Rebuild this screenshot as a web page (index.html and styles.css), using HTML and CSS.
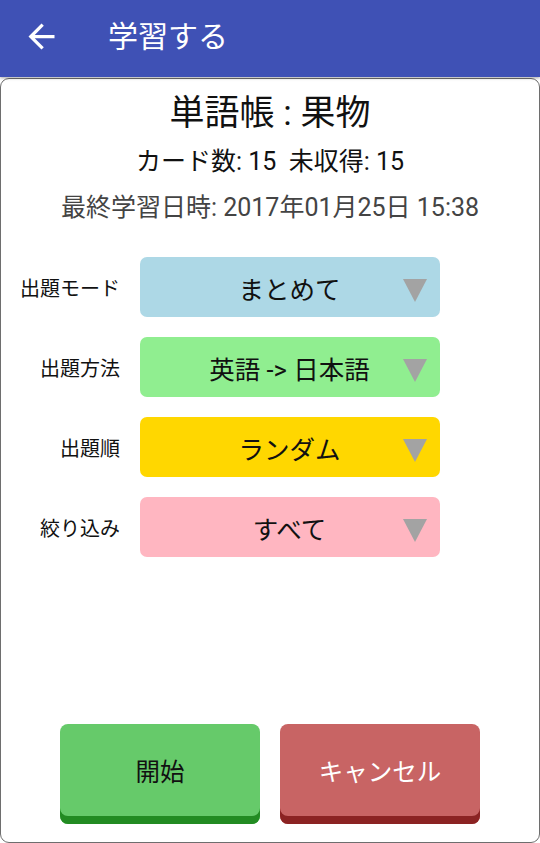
FILE: index.html
```html
<!DOCTYPE html>
<html lang="ja">
<head>
<meta charset="utf-8">
<link rel="stylesheet" href="styles.css">
</head>
<body>
<header class="appbar">
  <svg class="back" viewBox="0 0 24 24" width="39" height="39"><path d="M20 11H7.83l5.59-5.59L12 4l-8 8 8 8 1.41-1.41L7.83 13H20v-2z" fill="#fff"/></svg>
  <h1 class="appbar-title">学習する</h1>
</header>
<main class="card">
  <h2 class="deck-title">単語帳 : 果物</h2>
  <p class="counts">カード数: 15&nbsp; 未収得: 15</p>
  <p class="last">最終学習日時: 2017年01月25日 15:38</p>
  <div class="rows">
    <div class="row">
      <span class="label">出題モード</span>
      <div class="select sel-blue"><span class="value">まとめて</span><span class="arrow"></span></div>
    </div>
    <div class="row">
      <span class="label">出題方法</span>
      <div class="select sel-green"><span class="value">英語 -&gt; 日本語</span><span class="arrow"></span></div>
    </div>
    <div class="row">
      <span class="label">出題順</span>
      <div class="select sel-gold"><span class="value">ランダム</span><span class="arrow"></span></div>
    </div>
    <div class="row">
      <span class="label">絞り込み</span>
      <div class="select sel-pink"><span class="value">すべて</span><span class="arrow"></span></div>
    </div>
  </div>
  <div class="actions">
    <button class="btn btn-start">開始</button>
    <button class="btn btn-cancel">キャンセル</button>
  </div>
</main>
</body>
</html>
```
FILE: styles.css
```css
* { box-sizing: border-box; }
html, body {
  margin: 0;
  padding: 0;
  width: 540px;
  height: 843px;
  background: #fff;
  font-family: Roboto, "Noto Sans CJK JP", sans-serif;
  color: #111;
  overflow: hidden;
}
.appbar {
  height: 77px;
  background: #3F51B5;
  display: flex;
  align-items: center;
  padding-left: 22px;
  position: relative;
  z-index: 1;
  box-shadow: 0 1px 3px rgba(0,0,0,0.35);
}
.back { display: block; margin-top: -4px; }
.appbar-title {
  margin: -4px 0 0 47px;
  font-size: 30px;
  font-weight: 400;
  color: #fff;
  line-height: 1;
}
.card {
  margin-top: 1px;
  height: 765px;
  border: 1.5px solid #6e6e6e;
  border-radius: 9px;
  display: flex;
  flex-direction: column;
  align-items: center;
}
.deck-title {
  margin: 13px 0 0;
  font-size: 35px;
  font-weight: 400;
  line-height: 44px;
  color: #111;
}
.counts {
  margin: 11px 0 0;
  font-size: 25px;
  line-height: 30px;
  color: #111;
}
.last {
  margin: 16px 0 0;
  font-size: 25px;
  line-height: 30px;
  color: #444;
}
.rows {
  margin-top: 34px;
  width: 100%;
  display: flex;
  flex-direction: column;
  gap: 20px;
}
.row {
  display: flex;
  align-items: center;
}
.label {
  width: 119px;
  text-align: right;
  font-size: 20px;
  color: #111;
}
.select {
  margin-left: 19.5px;
  width: 300px;
  height: 60px;
  border-radius: 7px;
  display: flex;
  align-items: center;
  justify-content: center;
  position: relative;
}
.value {
  font-size: 25.5px;
  color: #111;
}
.arrow {
  position: absolute;
  right: 13px;
  top: 22px;
  width: 0;
  height: 0;
  border-left: 12px solid transparent;
  border-right: 12px solid transparent;
  border-top: 23px solid #a3a3a3;
}
.sel-blue { background: #ADD8E6; }
.sel-green { background: #90EE90; }
.sel-gold { background: #FFD700; }
.sel-pink { background: #FFB6C1; }
.actions {
  margin-top: auto;
  margin-bottom: 18px;
  display: flex;
  gap: 20px;
}
.btn {
  width: 200px;
  height: 100px;
  border: none;
  border-radius: 8px;
  font-family: inherit;
  font-size: 24.5px;
  padding: 0 0 8px;
}
.btn-start {
  background: #66CA6A;
  color: #111;
  box-shadow: inset 0 -8px 0 #228B22;
}
.btn-cancel {
  background: #C86464;
  color: #fff;
  box-shadow: inset 0 -8px 0 #8B2323;
}
```
